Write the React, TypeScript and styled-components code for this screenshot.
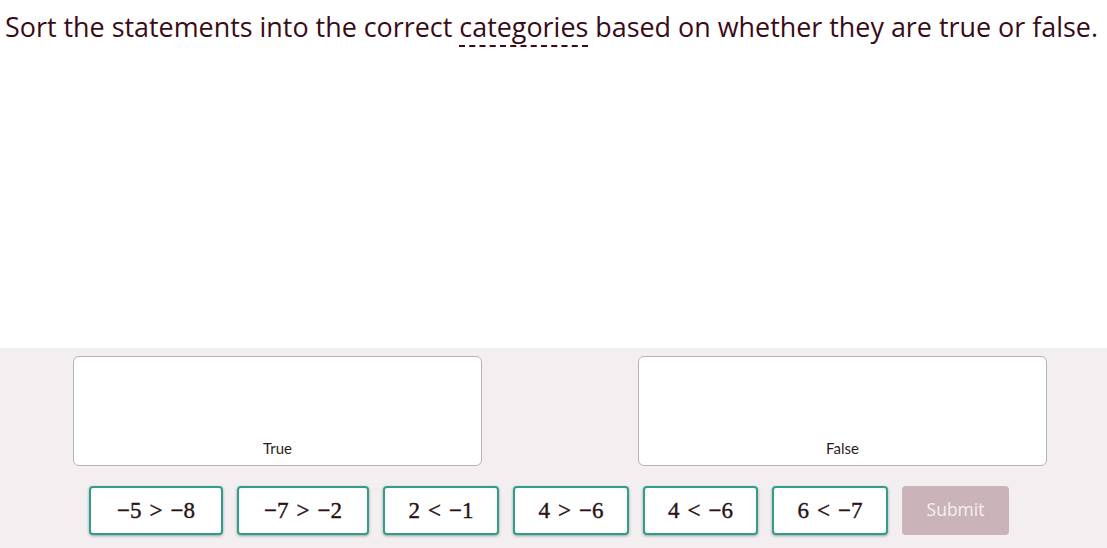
import styled, { createGlobalStyle } from 'styled-components';

const GlobalStyle = createGlobalStyle`
  html, body {
    margin: 0;
    padding: 0;
    background: #ffffff;
  }
  body {
    font-family: "Open Sans", "Liberation Sans", sans-serif;
  }
`;

interface Statement {
  left: string;
  op: string;
  right: string;
  width: number;
}

const statements: Statement[] = [
  { left: '−5', op: '>', right: '−8', width: 134 },
  { left: '−7', op: '>', right: '−2', width: 132 },
  { left: '2', op: '<', right: '−1', width: 116 },
  { left: '4', op: '>', right: '−6', width: 116 },
  { left: '4', op: '<', right: '−6', width: 115 },
  { left: '6', op: '<', right: '−7', width: 116 },
];

const App = () => {
  return (
    <>
      <GlobalStyle />
      <Page>
        <Prompt>
          <Heading>
            Sort the statements into the correct <Term>categories</Term> based on whether they are true or false.
          </Heading>
        </Prompt>
        <Workspace>
          <Bins>
            <Bin>
              <BinLabel>True</BinLabel>
            </Bin>
            <Bin>
              <BinLabel>False</BinLabel>
            </Bin>
          </Bins>
          <Tray>
            {statements.map((s, i) => (
              <Tile key={i} $w={s.width}>
                <MathText>
                  {s.left}
                  <Rel>{s.op}</Rel>
                  {s.right}
                </MathText>
              </Tile>
            ))}
            <SubmitButton disabled>Submit</SubmitButton>
          </Tray>
        </Workspace>
      </Page>
    </>
  );
};

const Page = styled.div`
  width: 1107px;
  height: 548px;
  display: flex;
  flex-direction: column;
  overflow: hidden;
`;

const Prompt = styled.div`
  height: 348px;
  padding: 9px 0 0 5px;
  box-sizing: border-box;
`;

const Heading = styled.h1`
  margin: 0;
  font-family: "Open Sans", "Liberation Sans", sans-serif;
  font-size: 26.9px;
  font-weight: 400;
  line-height: 36px;
  color: #3a0b16;
  white-space: nowrap;
`;

const Term = styled.span`
  border-bottom: 2px dashed #3a0b16;
  padding-bottom: 0;
`;

const Workspace = styled.div`
  flex: 1;
  background: #f3eff0;
  display: flex;
  flex-direction: column;
  padding-top: 8px;
  box-sizing: border-box;
`;

const Bins = styled.div`
  display: flex;
  gap: 156px;
  padding-left: 73px;
`;

const Bin = styled.div`
  width: 409px;
  height: 110px;
  box-sizing: border-box;
  background: #ffffff;
  border: 1px solid #b9b1b4;
  border-radius: 6px;
  display: flex;
  flex-direction: column;
  justify-content: flex-end;
  align-items: center;
  padding-bottom: 8px;
`;

const BinLabel = styled.span`
  font-family: Lato, "Open Sans", sans-serif;
  font-size: 15px;
  color: #2e1a1f;
`;

const Tray = styled.div`
  display: flex;
  gap: 14px;
  padding-left: 89px;
  margin-top: 20px;
`;

const Tile = styled.div<{ $w: number }>`
  width: ${(p) => p.$w}px;
  height: 49px;
  box-sizing: border-box;
  background: #ffffff;
  border: 2px solid #2f9f8b;
  border-radius: 4px;
  box-shadow: 0 1px 3px rgba(0, 0, 0, 0.35);
  display: flex;
  align-items: center;
  justify-content: center;
`;

const MathText = styled.span`
  font-family: "Liberation Serif", "DejaVu Serif", serif;
  font-size: 23px;
  color: #2a1216;
  font-weight: 400;
  -webkit-text-stroke: 0.4px #2a1216;
  white-space: nowrap;
`;

const Rel = styled.span`
  margin: 0 8px;
`;

const SubmitButton = styled.button`
  width: 107px;
  height: 49px;
  border: none;
  border-radius: 4px;
  background: #cab4ba;
  color: #f6eff1;
  font-family: "Open Sans", "Liberation Sans", sans-serif;
  font-size: 17.5px;
  padding: 0 0 3px;
  cursor: default;
`;

export default App;
